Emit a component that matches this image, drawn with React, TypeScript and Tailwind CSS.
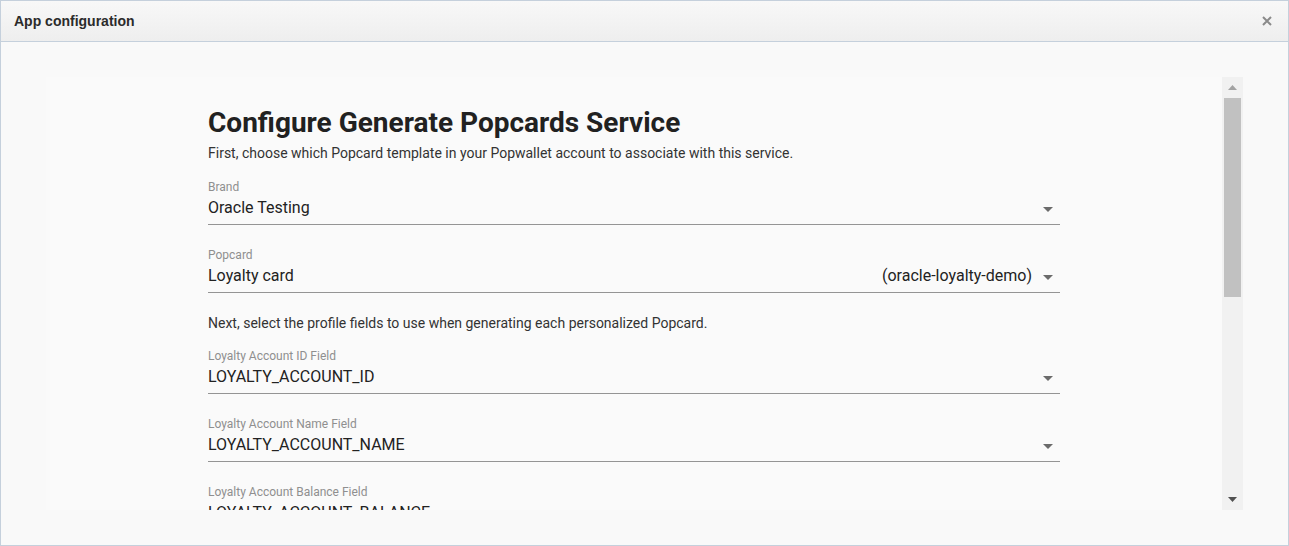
import { ReactNode } from "react";

const Caret = () => (
  <svg width="10" height="5" viewBox="0 0 10 5" className="shrink-0">
    <path d="M0 0 L10 0 L5 5 Z" fill="#6b6b6b" />
  </svg>
);

type FieldProps = {
  label: string;
  value: string;
  extra?: string;
  top?: string;
};

const SelectField = ({ label, value, extra, top = "mt-[22px]" }: FieldProps) => (
  <div className={top}>
    <div className="text-[12px] leading-[16px] text-[#8f8f8f]">{label}</div>
    <div className="mt-[1px] flex h-[29px] items-start border-b border-[#949494]">
      <div className="flex-1 text-[16px] leading-[24px] text-[#222222]">
        {value}
      </div>
      {extra && (
        <div className="text-[16px] leading-[24px] text-[#222222]">{extra}</div>
      )}
      <div className="ml-[11px] mr-[7px] flex h-[24px] items-center pt-[2px]">
        <Caret />
      </div>
    </div>
  </div>
);

const Paragraph = ({ children, className }: { children: ReactNode; className?: string }) => (
  <p className={"text-[14px] leading-[20px] text-[#333333] " + (className ?? "")}>
    {children}
  </p>
);

export default function App() {
  return (
    <div
      className="flex h-[546px] w-[1289px] flex-col overflow-hidden border border-[#c5d0dc] bg-[#f9f9f9]"
      style={{ fontFamily: "Roboto, 'Liberation Sans', sans-serif" }}
    >
      <div className="flex h-[41px] shrink-0 items-center justify-between border-b border-[#c5d0dc] bg-gradient-to-b from-[#f8f8f8] to-[#eeeeee] pl-[13px] pr-[16px]">
        <span
          className="text-[14px] font-bold text-[#2b2b2b]"
          style={{ fontFamily: "'Liberation Sans', Arial, sans-serif" }}
        >
          App configuration
        </span>
        <svg width="10" height="10" viewBox="0 0 10 10">
          <path d="M1 1 L9 9 M9 1 L1 9" stroke="#8a8a8a" strokeWidth="2" />
        </svg>
      </div>

      <div className="flex-1 pl-[45px] pr-[45px] pt-[35px]">
        <div className="flex h-[433px] w-[1197px] overflow-hidden bg-[#fafafa]">
          <div className="flex-1 overflow-hidden pl-[162px] pt-[29px]">
            <div className="w-[852px]">
              <h1 className="text-[28px] font-bold leading-[34px] text-[#212121]">
                Configure Generate Popcards Service
              </h1>
              <Paragraph className="mt-[3px]">
                First, choose which Popcard template in your Popwallet account to associate with this service.
              </Paragraph>
              <SelectField top="mt-[16px]" label="Brand" value="Oracle Testing" />
              <SelectField label="Popcard" value="Loyalty card" extra="(oracle-loyalty-demo)" />
              <Paragraph className="mt-[20px]">
                Next, select the profile fields to use when generating each personalized Popcard.
              </Paragraph>
              <SelectField top="mt-[15px]" label="Loyalty Account ID Field" value="LOYALTY_ACCOUNT_ID" />
              <SelectField label="Loyalty Account Name Field" value="LOYALTY_ACCOUNT_NAME" />
              <SelectField label="Loyalty Account Balance Field" value="LOYALTY_ACCOUNT_BALANCE" />
            </div>
          </div>

          <div className="flex w-[21px] shrink-0 flex-col items-center bg-[#f1f1f1]">
            <div className="flex h-[21px] w-full items-center justify-center">
              <svg width="9" height="5" viewBox="0 0 9 5">
                <path d="M0 5 L9 5 L4.5 0 Z" fill="#a3a3a3" />
              </svg>
            </div>
            <div className="h-[199px] w-[17px] bg-[#c1c1c1]" />
            <div className="flex-1" />
            <div className="flex h-[21px] w-full items-center justify-center">
              <svg width="9" height="5" viewBox="0 0 9 5">
                <path d="M0 0 L9 0 L4.5 5 Z" fill="#505050" />
              </svg>
            </div>
          </div>
        </div>
      </div>
    </div>
  );
}
